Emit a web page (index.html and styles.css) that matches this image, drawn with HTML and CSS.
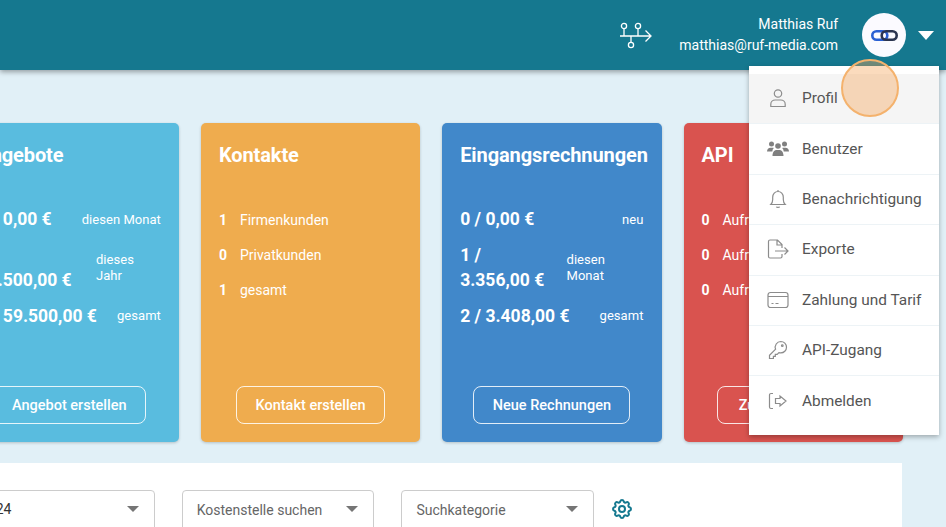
FILE: index.html
```html
<!DOCTYPE html>
<html lang="de">
<head>
  <meta charset="UTF-8">
  <meta name="viewport" content="width=device-width, initial-scale=1.0">
  <title>Dashboard</title>
  <link rel="stylesheet" href="styles.css">
</head>
<body>
  <header class="topbar">
    <svg class="flow-icon" width="34" height="28" viewBox="0 0 34 28" fill="none" stroke="#fff" stroke-width="1.3">
      <circle cx="5" cy="5" r="2.6"/>
      <circle cx="19" cy="5" r="2.6"/>
      <circle cx="12" cy="24" r="2.6"/>
      <path d="M5 7.6V15M19 7.6V15M12 15v6.4M1 15h31M26.5 9.5 32 15l-5.500 5.500"/>
    </svg>
    <div class="user">
      <div>Matthias Ruf</div>
      <div>matthias@ruf-media.com</div>
    </div>
    <div class="avatar">
      <svg width="27" height="11" viewBox="0 0 27 11" fill="none" stroke-width="2.600">
        <rect x="1.300" y="1.300" width="15" height="8.400" rx="4.200" stroke="#2a5fd3"/>
        <rect x="10.700" y="1.300" width="15" height="8.400" rx="4.200" stroke="#2b3450"/>
      </svg>
    </div>
    <div class="caret"></div>
  </header>

  <main class="content">
    <section class="cards">
      <div class="card card-blue">
        <h2>Angebote</h2>
        <div class="stats">
          <div class="row"><span class="value">0 / 0,00 €</span><span class="label">diesen Monat</span></div>
          <div class="row"><span class="value">1 /<br>59.500,00 €</span><span class="label label-short">dieses Jahr</span></div>
          <div class="row"><span class="value">1 / 59.500,00 €</span><span class="label">gesamt</span></div>
        </div>
        <a class="btn">Angebot erstellen</a>
      </div>

      <div class="card card-orange">
        <h2>Kontakte</h2>
        <div class="stats">
          <div class="row row-count"><b>1</b><span>Firmenkunden</span></div>
          <div class="row row-count"><b>0</b><span>Privatkunden</span></div>
          <div class="row row-count"><b>1</b><span>gesamt</span></div>
        </div>
        <a class="btn">Kontakt erstellen</a>
      </div>

      <div class="card card-navy">
        <h2>Eingangsrechnungen</h2>
        <div class="stats">
          <div class="row"><span class="value">0 / 0,00 €</span><span class="label">neu</span></div>
          <div class="row"><span class="value">1 /<br>3.356,00 €</span><span class="label label-wide">diesen Monat</span></div>
          <div class="row"><span class="value">2 / 3.408,00 €</span><span class="label">gesamt</span></div>
        </div>
        <a class="btn">Neue Rechnungen</a>
      </div>

      <div class="card card-red">
        <h2>API</h2>
        <div class="stats">
          <div class="row row-count"><b>0</b><span>Aufrufe heute</span></div>
          <div class="row row-count"><b>0</b><span>Aufrufe Monat</span></div>
          <div class="row row-count"><b>0</b><span>Aufrufe gesamt</span></div>
        </div>
        <a class="btn btn-wide">Zugang erstellen</a>
      </div>
    </section>

    <section class="panel">
      <div class="select select-value">2024<i></i></div>
      <div class="select">Kostenstelle suchen<i></i></div>
      <div class="select">Suchkategorie<i></i></div>
      <svg class="gear" width="24" height="24" viewBox="0 0 24 24" fill="none" stroke="#14788f" stroke-width="2">
        <path d="M10.325 4.317c.426-1.756 2.924-1.756 3.350 0a1.724 1.724 0 002.573 1.066c1.543-.94 3.310.826 2.370 2.370a1.724 1.724 0 001.065 2.572c1.756.426 1.756 2.924 0 3.350a1.724 1.724 0 00-1.066 2.573c.94 1.543-.826 3.310-2.370 2.370a1.724 1.724 0 00-2.572 1.065c-.426 1.756-2.924 1.756-3.350 0a1.724 1.724 0 00-2.573-1.066c-1.543.94-3.310-.826-2.370-2.370a1.724 1.724 0 00-1.065-2.572c-1.756-.426-1.756-2.924 0-3.350a1.724 1.724 0 001.066-2.573c-.94-1.543.826-3.310 2.370-2.370.996.608 2.296.07 2.572-1.065z"/>
        <circle cx="12" cy="12" r="3"/>
      </svg>
    </section>
  </main>

  <nav class="menu">
    <a class="menu-item active">
      <svg viewBox="0 0 20 20"><circle cx="10" cy="5.500" r="3.700"/><path d="M2.800 18.500v-2.200c0-2.400 2-4.300 4.400-4.300h5.600c2.400 0 4.400 1.900 4.400 4.300v2.200z"/></svg>
      Profil
    </a>
    <a class="menu-item">
      <svg class="filled" viewBox="0 0 22 20"><circle cx="4.500" cy="5" r="2.500"/><circle cx="17.500" cy="5" r="2.500"/><circle cx="11" cy="7" r="2.800"/><path d="M0 12.500C0 10 1.500 8.700 3.500 8.700h2c.5 0 1 .1 1.300.3-.9 1-1.400 2.100-1.500 3.500zM22 12.500c0-2.500-1.500-3.800-3.500-3.800h-2c-.5 0-1 .1-1.300.3.900 1 1.400 2.100 1.500 3.500zM5.500 17c0-4 2-6 4-6h3c2 0 4 2 4 6z"/></svg>
      Benutzer
    </a>
    <a class="menu-item">
      <svg viewBox="0 0 20 20"><path d="M2.800 15.500c1.300-1.300 1.900-2.700 1.900-5V8.200C4.700 5 7 2.500 10 2.500s5.300 2.500 5.300 5.700v2.300c0 2.300.6 3.700 1.900 5zM10 1v1.500M8.300 17.800c.5.800 2.900.8 3.400 0"/></svg>
      Benachrichtigung
    </a>
    <a class="menu-item">
      <svg viewBox="0 0 22 20"><path d="M15 9V5.500L10.500 1H3a1.500 1.500 0 0 0-1.500 1.500v15A1.500 1.500 0 0 0 3 19h10.500a1.500 1.500 0 0 0 1.500-1.500V15M10 1v5h5M8 12h13M17.500 8.500 21 12l-3.500 3.500"/></svg>
      Exporte
    </a>
    <a class="menu-item">
      <svg viewBox="0 0 22 18"><rect x="1" y="1.500" width="20" height="15" rx="2.500"/><path d="M1 5.500h20M4.500 12.500h2M8.500 12.500h3"/></svg>
      Zahlung und Tarif
    </a>
    <a class="menu-item">
      <svg viewBox="0 0 20 20"><path d="M12.800 1.500a5.700 5.700 0 0 1 0 11.400c-.7 0-1.300-.1-1.900-.3l-1.700 1.700H7.300v2H5.400v2.200H1.500v-3.200l6.100-6.100a5.700 5.700 0 0 1 5.200-7.700z"/><circle cx="14.300" cy="5.700" r=".8"/></svg>
      API-Zugang
    </a>
    <a class="menu-item">
      <svg viewBox="-1 -1 22 20"><path d="M5 1.500H3A1.500 1.500 0 0 0 1.500 3v12A1.500 1.500 0 0 0 3 16.500h2M7.500 6.500h4.500V4l6 5-6 5v-2.500H7.500z"/></svg>
      Abmelden
    </a>
  </nav>

  <div class="touch"></div>
</body>
</html>
```

FILE: styles.css
```css
* {
  box-sizing: border-box;
}

html,
body {
  height: 100%;
}

body {
  margin: 0;
  overflow: hidden;
  background: #e1f0f7;
  font-family: Roboto, sans-serif;
  color: #fff;
}

.topbar {
  height: 70px;
  display: flex;
  align-items: center;
  justify-content: flex-end;
  padding-right: 12px;
  background: #15788f;
  box-shadow: 0 2px 5px rgba(0, 0, 0, 0.35);
}

.flow-icon {
  margin-right: 26px;
}

.user {
  font-size: 14px;
  line-height: 21px;
  text-align: right;
}

.avatar {
  width: 44px;
  height: 44px;
  margin-left: 24px;
  display: flex;
  align-items: center;
  justify-content: center;
  border-radius: 50%;
  background: #fbfaff;
}

.caret {
  margin-left: 12px;
  border-top: 9px solid #fff;
  border-left: 8.500px solid transparent;
  border-right: 8.500px solid transparent;
}

.content {
  width: 942.400px;
  margin-left: -40.400px;
  padding-top: 53px;
}

.cards {
  display: grid;
  grid-template-columns: repeat(4, 219.300px);
  column-gap: 22px;
}

.card {
  height: 319px;
  display: flex;
  flex-direction: column;
  padding: 18px;
  border-radius: 5px;
  box-shadow: 0 1px 3px rgba(0, 0, 0, 0.2);
}

.card h2 {
  margin: 0;
  font-size: 20px;
  font-weight: 700;
  line-height: 28px;
  letter-spacing: -0.1px;
  white-space: nowrap;
}

.card-blue {
  background: #59bcdf;
}

.card-orange {
  background: #efac4e;
}

.card-navy {
  background: #4188ca;
}

.card-red {
  background: #d9534f;
}

.stats {
  margin-top: 38px;
  display: flex;
  flex-direction: column;
  gap: 10px;
}

.row {
  display: flex;
  align-items: center;
  justify-content: space-between;
  min-height: 25px;
}

.value {
  font-size: 17.500px;
  font-weight: 700;
  line-height: 25.500px;
}

.label {
  font-size: 13px;
  line-height: 16.500px;
  letter-spacing: 0.05px;
}

.label-short {
  width: 65px;
}

.label-wide {
  width: 77px;
}

.row-count {
  justify-content: flex-start;
  font-size: 14px;
}

.row-count b {
  width: 21px;
  font-weight: 700;
}

.btn {
  margin-top: auto;
  align-self: center;
  height: 38px;
  padding: 0 18.500px;
  display: flex;
  align-items: center;
  justify-content: center;
  border: 1px solid rgba(255, 255, 255, 0.85);
  border-radius: 8px;
  font-size: 14.500px;
  font-weight: 500;
  white-space: nowrap;
}

.btn-wide {
  width: 152px;
}

.panel {
  height: 120px;
  margin-top: 21px;
  padding: 27px 2.400px;
  display: flex;
  align-items: flex-start;
  gap: 27px;
  background: #fff;
  color: #666;
}

.select {
  position: relative;
  width: 192.700px;
  height: 50px;
  padding: 11px 14px;
  border: 1px solid #ccc;
  border-radius: 4px;
  font-size: 14px;
  line-height: 16px;
}

.select i {
  position: absolute;
  top: 15px;
  right: 15px;
  border-top: 6px solid #757575;
  border-left: 6px solid transparent;
  border-right: 6px solid transparent;
}

.select-value {
  padding: 10px 14px 10px 17px;
  color: #333;
}

.gear {
  margin: 7px 0 0 -11px;
}

.menu {
  position: absolute;
  top: 66px;
  left: 749px;
  width: 190px;
  padding: 8px 0;
  background: #fff;
  color: #555;
  box-shadow: 0 2px 5px rgba(0, 0, 0, 0.3);
}

.menu-item {
  height: 50.400px;
  display: flex;
  align-items: center;
  padding: 0 0 1px 18px;
  gap: 13px;
  font-size: 15.400px;
  border-bottom: 1px solid #edf3f6;
  white-space: nowrap;
}

.menu-item:last-child {
  border-bottom: 0;
}

.menu-item.active {
  background: #f5f5f5;
}

.menu-item svg {
  width: 22px;
  height: 20px;
  flex: none;
  fill: none;
  stroke: #8c8c8c;
  stroke-width: 1.200;
}

.menu-item svg.filled {
  fill: #808080;
  stroke: none;
}

.touch {
  position: absolute;
  top: 59px;
  left: 841px;
  width: 58px;
  height: 58px;
  border: 2px solid #f4b26d;
  border-radius: 50%;
  background: rgba(245, 165, 90, 0.4);
}
```
